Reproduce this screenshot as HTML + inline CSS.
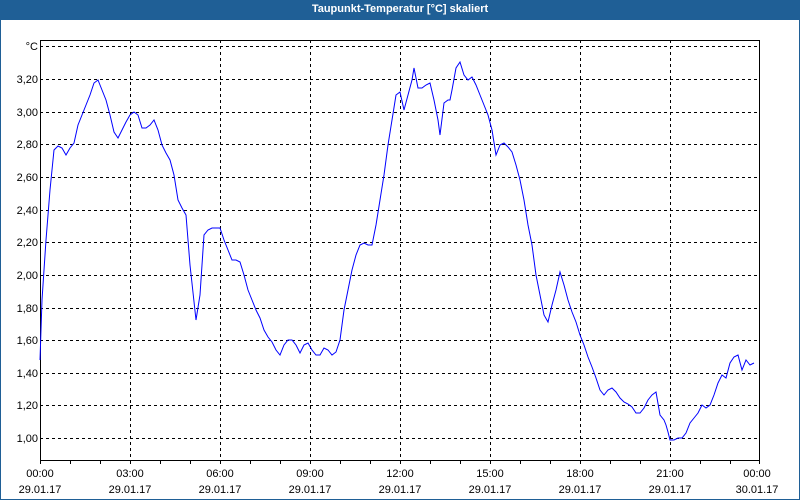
<!DOCTYPE html>
<html><head><style>
body{margin:0;width:800px;height:500px;overflow:hidden;background:#fff;font-family:"Liberation Sans",sans-serif}
.win{position:absolute;left:0;top:0;width:798px;height:498px;border:1px solid #1f5f96;background:#fff}
.title{position:absolute;left:0;top:0;width:800px;height:20px;background:#1f5f96;color:#fff;font-weight:bold;font-size:11px;text-align:center;line-height:19px}
</style></head><body>
<div class="win"></div>
<div class="title">Taupunkt-Temperatur [°C] skaliert</div>
<svg style="position:absolute;left:0;top:0" width="800" height="500" font-family="Liberation Sans, sans-serif" font-size="11" fill="#000">
<g stroke="#000" stroke-width="1" stroke-dasharray="3,3" fill="none">
<line x1="40" y1="46.5" x2="760" y2="46.5"/>
<line x1="40" y1="79.5" x2="760" y2="79.5"/>
<line x1="40" y1="112.5" x2="760" y2="112.5"/>
<line x1="40" y1="144.5" x2="760" y2="144.5"/>
<line x1="40" y1="177.5" x2="760" y2="177.5"/>
<line x1="40" y1="210.5" x2="760" y2="210.5"/>
<line x1="40" y1="242.5" x2="760" y2="242.5"/>
<line x1="40" y1="275.5" x2="760" y2="275.5"/>
<line x1="40" y1="308.5" x2="760" y2="308.5"/>
<line x1="40" y1="340.5" x2="760" y2="340.5"/>
<line x1="40" y1="373.5" x2="760" y2="373.5"/>
<line x1="40" y1="405.5" x2="760" y2="405.5"/>
<line x1="40" y1="438.5" x2="760" y2="438.5"/>
<line x1="130.5" y1="40" x2="130.5" y2="460"/>
<line x1="220.5" y1="40" x2="220.5" y2="460"/>
<line x1="310.5" y1="40" x2="310.5" y2="460"/>
<line x1="400.5" y1="40" x2="400.5" y2="460"/>
<line x1="490.5" y1="40" x2="490.5" y2="460"/>
<line x1="580.5" y1="40" x2="580.5" y2="460"/>
<line x1="670.5" y1="40" x2="670.5" y2="460"/>
</g>
<g stroke="#000" fill="none">
<rect x="40.5" y="40.5" width="719" height="420"/>
<path d="M70.5 461v3M100.5 461v3M130.5 461v3M160.5 461v3M190.5 461v3M220.5 461v3M250.5 461v3M280.5 461v3M310.5 461v3M340.5 461v3M370.5 461v3M400.5 461v3M430.5 461v3M460.5 461v3M490.5 461v3M520.5 461v3M550.5 461v3M580.5 461v3M610.5 461v3M640.5 461v3M670.5 461v3M700.5 461v3M730.5 461v3M40.5 461v3M759.5 461v3"/>
</g>
<polyline fill="none" stroke="#0000ff" stroke-width="1" points="40,360 42,300 46,240 50,190 54,150 58,146 62,148 66,155 70,148 74,143 78,125 82,115 86,105 90,95 94,83 98,80 102,90 106,100 110,115 114,132 118,138 122,130 126,122 130,115 134,112 138,115 142,128 146,128 150,125 154,120 158,130 162,145 166,153 170,160 174,175 178,200 182,208 186,215 190,265 196,320 200,295 204,235 208,230 212,228 216,228 220,228 224,240 228,250 232,260 236,260 240,262 244,275 248,290 252,300 256,310 260,318 264,330 268,337 272,342 276,350 280,355 284,345 288,340 292,340 296,345 300,353 304,345 308,343 312,350 316,355 320,355 324,348 328,350 332,355 336,352 340,340 344,310 348,290 352,270 356,255 360,245 364,243 368,245 372,245 376,225 380,200 384,175 388,145 392,120 396,95 400,92 404,110 408,95 412,80 414,68 418,88 422,88 426,85 430,83 434,100 438,120 440,135 444,103 448,100 450,100 452,90 456,68 460,62 464,75 468,80 472,77 476,85 480,95 484,105 488,115 492,130 496,155 500,145 504,143 508,147 512,152 516,165 520,180 524,200 528,225 532,245 536,275 540,295 544,315 548,322 552,305 556,290 560,272 564,285 568,300 572,312 576,322 580,335 584,345 588,357 592,367 596,378 600,390 604,395 608,390 612,388 616,392 620,398 624,402 628,404 632,407 636,413 640,413 644,408 648,400 652,395 656,392 660,415 664,420 666,425 668,432 670,440 674,440 678,438 682,438 686,433 690,423 694,418 698,413 702,405 706,408 710,405 714,395 718,383 722,375 726,378 730,363 734,357 738,355 742,370 746,360 750,365 754,363"/>
<g text-anchor="end">
<text x="38" y="50">°C</text>
<text x="38" y="83">3,20</text>
<text x="38" y="116">3,00</text>
<text x="38" y="148">2,80</text>
<text x="38" y="181">2,60</text>
<text x="38" y="214">2,40</text>
<text x="38" y="246">2,20</text>
<text x="38" y="279">2,00</text>
<text x="38" y="312">1,80</text>
<text x="38" y="344">1,60</text>
<text x="38" y="377">1,40</text>
<text x="38" y="409">1,20</text>
<text x="38" y="442">1,00</text>
</g>
<g text-anchor="middle">
<text x="40" y="477">00:00</text><text x="40" y="493">29.01.17</text>
<text x="130" y="477">03:00</text><text x="130" y="493">29.01.17</text>
<text x="220" y="477">06:00</text><text x="220" y="493">29.01.17</text>
<text x="310" y="477">09:00</text><text x="310" y="493">29.01.17</text>
<text x="400" y="477">12:00</text><text x="400" y="493">29.01.17</text>
<text x="490" y="477">15:00</text><text x="490" y="493">29.01.17</text>
<text x="580" y="477">18:00</text><text x="580" y="493">29.01.17</text>
<text x="670" y="477">21:00</text><text x="670" y="493">29.01.17</text>
<text x="757" y="477">00:00</text><text x="757" y="493">30.01.17</text>
</g>
</svg>
</body></html>
